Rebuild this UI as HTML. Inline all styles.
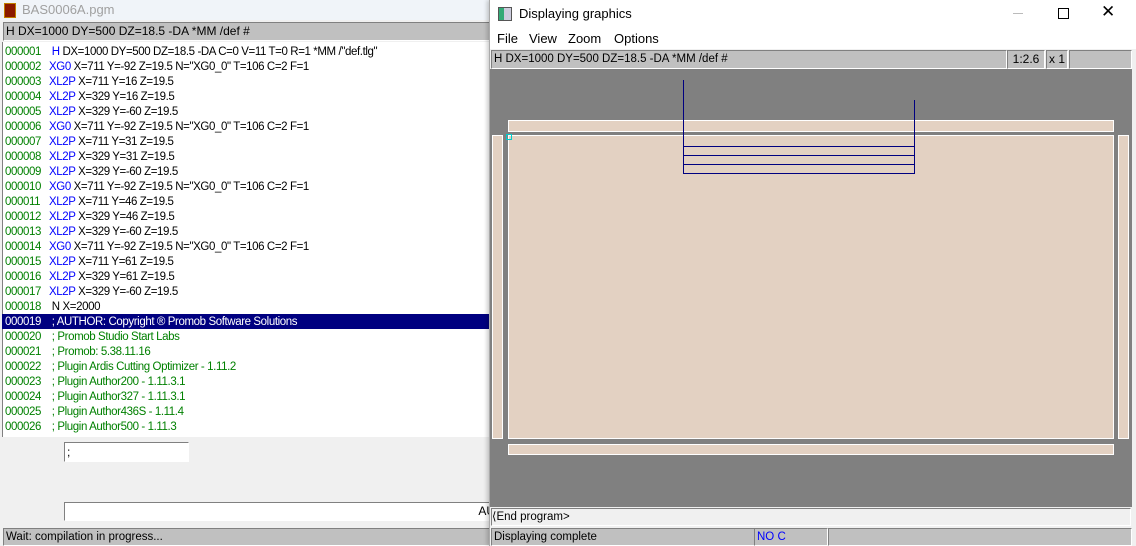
<html><head><style>
body{margin:0;width:1136px;height:546px;position:relative;overflow:hidden;background:#f0f0f0;font-family:"Liberation Sans",sans-serif;font-size:12px;}
.a{position:absolute;}
.r{position:absolute;left:5px;height:15px;line-height:15px;white-space:nowrap;font-size:11.5px;letter-spacing:-0.4px}
.n{color:#008000;display:inline-block;width:44px}
.b{color:#0000ff}
.g{color:#008000}
.sunk{border:1px solid;border-color:#808080 #fff #fff #808080;}
</style></head><body>
<div class="a" style="left:0;top:0;width:489px;height:20px;background:#f0f4f9"></div>
<div class="a" style="left:4px;top:3px;width:10px;height:13px;background:#8b1a00;border:1px solid #c08000"></div>
<div class="a" style="left:22px;top:2px;color:#a0a0a0;font-size:13px">BAS0006A.pgm</div>
<div class="a sunk" style="left:3px;top:22px;width:484px;height:17px;background:#c0c0c0;line-height:17px;padding-left:2px;font-size:12px">H DX=1000 DY=500 DZ=18.5 -DA *MM /def #</div>
<div class="a" style="left:2px;top:42px;width:487px;height:395px;background:#fff;border-left:1px solid #808080"></div>
<div class="a" style="left:2px;top:314px;width:487px;height:15px;background:#000080"></div>
<div class="r" style="top:45px"><span class="n">000001</span><span class="b">&nbsp;H</span> DX=1000 DY=500 DZ=18.5 -DA C=0 V=11 T=0 R=1 *MM /"def.tlg"</div>
<div class="r" style="top:60px"><span class="n">000002</span><span class="b">XG0</span> X=711 Y=-92 Z=19.5 N="XG0_0" T=106 C=2 F=1</div>
<div class="r" style="top:75px"><span class="n">000003</span><span class="b">XL2P</span> X=711 Y=16 Z=19.5</div>
<div class="r" style="top:90px"><span class="n">000004</span><span class="b">XL2P</span> X=329 Y=16 Z=19.5</div>
<div class="r" style="top:105px"><span class="n">000005</span><span class="b">XL2P</span> X=329 Y=-60 Z=19.5</div>
<div class="r" style="top:120px"><span class="n">000006</span><span class="b">XG0</span> X=711 Y=-92 Z=19.5 N="XG0_0" T=106 C=2 F=1</div>
<div class="r" style="top:135px"><span class="n">000007</span><span class="b">XL2P</span> X=711 Y=31 Z=19.5</div>
<div class="r" style="top:150px"><span class="n">000008</span><span class="b">XL2P</span> X=329 Y=31 Z=19.5</div>
<div class="r" style="top:165px"><span class="n">000009</span><span class="b">XL2P</span> X=329 Y=-60 Z=19.5</div>
<div class="r" style="top:180px"><span class="n">000010</span><span class="b">XG0</span> X=711 Y=-92 Z=19.5 N="XG0_0" T=106 C=2 F=1</div>
<div class="r" style="top:195px"><span class="n">000011</span><span class="b">XL2P</span> X=711 Y=46 Z=19.5</div>
<div class="r" style="top:210px"><span class="n">000012</span><span class="b">XL2P</span> X=329 Y=46 Z=19.5</div>
<div class="r" style="top:225px"><span class="n">000013</span><span class="b">XL2P</span> X=329 Y=-60 Z=19.5</div>
<div class="r" style="top:240px"><span class="n">000014</span><span class="b">XG0</span> X=711 Y=-92 Z=19.5 N="XG0_0" T=106 C=2 F=1</div>
<div class="r" style="top:255px"><span class="n">000015</span><span class="b">XL2P</span> X=711 Y=61 Z=19.5</div>
<div class="r" style="top:270px"><span class="n">000016</span><span class="b">XL2P</span> X=329 Y=61 Z=19.5</div>
<div class="r" style="top:285px"><span class="n">000017</span><span class="b">XL2P</span> X=329 Y=-60 Z=19.5</div>
<div class="r" style="top:300px"><span class="n">000018</span>&nbsp;N X=2000</div>
<div class="r" style="top:315px;color:#fff"><span class="n" style="color:#fff">000019</span>&nbsp;; AUTHOR: Copyright ® Promob Software Solutions</div>
<div class="r g" style="top:330px"><span class="n">000020</span>&nbsp;; Promob Studio Start Labs</div>
<div class="r g" style="top:345px"><span class="n">000021</span>&nbsp;; Promob: 5.38.11.16</div>
<div class="r g" style="top:360px"><span class="n">000022</span>&nbsp;; Plugin Ardis Cutting Optimizer - 1.11.2</div>
<div class="r g" style="top:375px"><span class="n">000023</span>&nbsp;; Plugin Author200 - 1.11.3.1</div>
<div class="r g" style="top:390px"><span class="n">000024</span>&nbsp;; Plugin Author327 - 1.11.3.1</div>
<div class="r g" style="top:405px"><span class="n">000025</span>&nbsp;; Plugin Author436S - 1.11.4</div>
<div class="r g" style="top:420px"><span class="n">000026</span>&nbsp;; Plugin Author500 - 1.11.3</div>
<div class="a sunk" style="left:64px;top:442px;width:121px;height:18px;background:#fff;line-height:18px;padding-left:2px">;</div>
<div class="a sunk" style="left:64px;top:502px;width:430px;height:17px;background:#fff;line-height:17px;text-align:right">AU</div>
<div class="a sunk" style="left:3px;top:528px;width:484px;height:16px;background:#c0c0c0;line-height:16px;padding-left:2px;font-size:11.5px">Wait: compilation in progress...</div>
<div class="a" style="left:489px;top:0;width:647px;height:546px;background:#f0f0f0;border-left:1px solid #aaa;box-shadow:-2px 0 4px rgba(0,0,0,.2)"></div>
<div class="a" style="left:490px;top:0;width:646px;height:28px;background:#fff"></div>
<div class="a" style="left:498px;top:7px;width:12px;height:12px;border:1px solid #555;background:linear-gradient(90deg,#3a7 0 40%,#ccd 40%)"></div>
<div class="a" style="left:519px;top:6px;font-size:13px">Displaying graphics</div>
<div class="a" style="left:1013px;top:13px;width:10px;height:1px;background:#bbb"></div>
<div class="a" style="left:1058px;top:8px;width:9px;height:9px;border:1px solid #000"></div>
<div class="a" style="left:1101px;top:2px;font-size:17px">✕</div>
<div class="a" style="left:490px;top:28px;width:646px;height:21px;background:#fff"></div>
<div class="a" style="left:497px;top:31px;font-size:13px">File</div>
<div class="a" style="left:529px;top:31px;font-size:13px">View</div>
<div class="a" style="left:568px;top:31px;font-size:13px">Zoom</div>
<div class="a" style="left:614px;top:31px;font-size:13px">Options</div>
<div class="a sunk" style="left:491px;top:50px;width:512px;height:17px;background:#c0c0c0;line-height:17px;padding-left:2px;font-size:11.5px">H DX=1000 DY=500 DZ=18.5 -DA *MM /def #</div>
<div class="a sunk" style="left:1007px;top:50px;width:36px;height:17px;background:#c0c0c0;line-height:17px;text-align:center">1:2.6</div>
<div class="a sunk" style="left:1046px;top:50px;width:20px;height:17px;background:#c0c0c0;line-height:17px;text-align:center">x 1</div>
<div class="a sunk" style="left:1069px;top:50px;width:61px;height:17px;background:#c0c0c0"></div>
<div class="a" style="left:490px;top:69px;width:642px;height:438px;background:#808080"></div>
<div class="a" style="left:508px;top:120px;width:604px;height:10px;background:#e3d1c2;border:1px solid #fff"></div>
<div class="a" style="left:508px;top:135px;width:604px;height:302px;background:#e3d1c2;border:1px solid #fff"></div>
<div class="a" style="left:492px;top:135px;width:9px;height:302px;background:#e3d1c2;border:1px solid #fff"></div>
<div class="a" style="left:1118px;top:135px;width:9px;height:302px;background:#e3d1c2;border:1px solid #fff"></div>
<div class="a" style="left:508px;top:444px;width:604px;height:9px;background:#e3d1c2;border:1px solid #fff"></div>
<div class="a" style="left:506px;top:134px;width:4px;height:4px;border:1px solid #0cc"></div>
<svg class="a" style="left:0;top:0" width="1136" height="546"><g stroke="#000080" stroke-width="1" fill="none" shape-rendering="crispEdges"><path d="M683.5 80V173.5M914.5 100V173.5M683 146.5H915M683 155.5H915M683 164.5H915M683 173.5H915"/></g></svg>
<div class="a sunk" style="left:491px;top:508px;width:638px;height:16px;background:#f0f0f0;line-height:16px;font-size:11.5px">⟨End program&gt;</div>
<div class="a sunk" style="left:491px;top:528px;width:260px;height:16px;background:#c0c0c0;line-height:16px;padding-left:2px;font-size:11.5px">Displaying complete</div>
<div class="a sunk" style="left:754px;top:528px;width:70px;height:16px;background:#c0c0c0;line-height:16px;padding-left:2px;color:#00f;font-size:11.5px">NO C</div>
<div class="a sunk" style="left:828px;top:528px;width:302px;height:16px;background:#c0c0c0"></div>
</body></html>
